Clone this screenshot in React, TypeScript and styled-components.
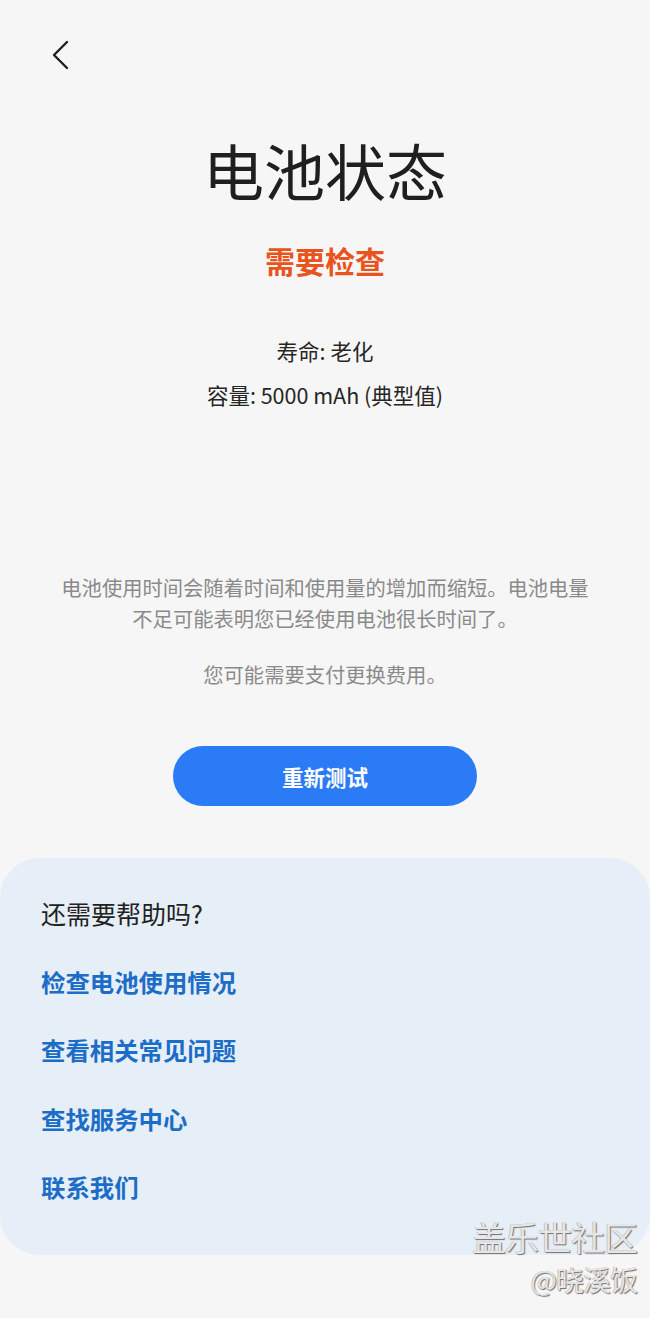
import styled, { createGlobalStyle } from 'styled-components';

const GlobalStyle = createGlobalStyle`
  html, body {
    margin: 0;
    padding: 0;
    background: #f6f6f6;
  }
  body {
    font-family: "Noto Sans CJK SC", "Noto Sans", sans-serif;
    color: #222;
  }
`;

const Page = styled.div`
  position: relative;
  width: 650px;
  min-height: 1318px;
  display: flex;
  flex-direction: column;
  align-items: center;
  background: #f6f6f6;
`;

const Header = styled.header`
  align-self: stretch;
  height: 108px;
  display: flex;
  align-items: flex-start;
  padding: 38px 0 0 44px;
  box-sizing: border-box;
`;

const BackButton = styled.button`
  width: 34px;
  height: 34px;
  padding: 0;
  border: none;
  background: transparent;
  display: flex;
  align-items: center;
  justify-content: center;
  cursor: pointer;
`;

const Title = styled.h1`
  margin: 27px 0 0;
  font-size: 61px;
  line-height: 70px;
  font-weight: 400;
  color: #1f1f1f;
`;

const Status = styled.div`
  margin-top: 35px;
  font-size: 30px;
  line-height: 40px;
  font-weight: 700;
  color: #e9531d;
`;

const InfoList = styled.div`
  margin-top: 49px;
  display: flex;
  flex-direction: column;
  align-items: center;
`;

const InfoLine = styled.div`
  font-size: 21.5px;
  line-height: 44px;
  color: #262626;
`;

const Description = styled.p<{ $gap: number }>`
  margin: ${(p) => p.$gap}px 0 0;
  width: 536px;
  text-align: center;
  font-size: 20.3px;
  line-height: 31px;
  color: #8a8a8a;
`;

const RetestButton = styled.button`
  margin-top: 56px;
  width: 304px;
  height: 60px;
  border: none;
  border-radius: 30px;
  background: #2a7bf5;
  color: #fff;
  font-family: inherit;
  font-size: 21.5px;
  font-weight: 700;
  cursor: pointer;
`;

const HelpCard = styled.section`
  margin-top: 52px;
  align-self: stretch;
  height: 397px;
  box-sizing: border-box;
  padding: 35px 41px 0;
  border-radius: 40px;
  background: #e6eef7;
  display: flex;
  flex-direction: column;
  gap: 28.5px;
`;

const HelpHeading = styled.h2`
  margin: 0;
  font-size: 25px;
  line-height: 40px;
  font-weight: 400;
  color: #222;
`;

const HelpLink = styled.a`
  font-size: 24.4px;
  line-height: 40px;
  font-weight: 700;
  color: #1b6dc7;
  text-decoration: none;
  cursor: pointer;
`;

const Watermark = styled.div`
  position: absolute;
  right: 13px;
  top: 1214px;
  display: flex;
  flex-direction: column;
  align-items: flex-end;
  color: #e6e6e6;
  text-shadow: 1px 1px 1px #6f6f6f, -0.5px -0.5px 0 #b0b0b0;
  pointer-events: none;
`;

const WatermarkLine = styled.span<{ $size: number; $lh: number }>`
  font-size: ${(p) => p.$size}px;
  line-height: ${(p) => p.$lh}px;
  letter-spacing: -1px;
`;

const helpLinks = ['检查电池使用情况', '查看相关常见问题', '查找服务中心', '联系我们'];

export default function App() {
  return (
    <>
      <GlobalStyle />
      <Page>
        <Header>
          <BackButton aria-label="返回">
            <svg width="20" height="30" viewBox="0 0 20 30" fill="none">
              <path d="M16 2 L3 15 L16 28" stroke="#1f1f1f" strokeWidth="2.4" strokeLinecap="round" strokeLinejoin="round" />
            </svg>
          </BackButton>
        </Header>

        <Title>电池状态</Title>
        <Status>需要检查</Status>

        <InfoList>
          <InfoLine>寿命: 老化</InfoLine>
          <InfoLine>容量: 5000 mAh (典型值)</InfoLine>
        </InfoList>

        <Description $gap={155}>
          电池使用时间会随着时间和使用量的增加而缩短。电池电量不足可能表明您已经使用电池很长时间了。
        </Description>
        <Description $gap={25}>您可能需要支付更换费用。</Description>

        <RetestButton>重新测试</RetestButton>

        <HelpCard>
          <HelpHeading>还需要帮助吗?</HelpHeading>
          {helpLinks.map((label) => (
            <HelpLink key={label}>{label}</HelpLink>
          ))}
        </HelpCard>

        <Watermark>
          <WatermarkLine $size={34} $lh={46}>盖乐世社区</WatermarkLine>
          <WatermarkLine $size={28} $lh={38}>@晓溪饭</WatermarkLine>
        </Watermark>
      </Page>
    </>
  );
}
